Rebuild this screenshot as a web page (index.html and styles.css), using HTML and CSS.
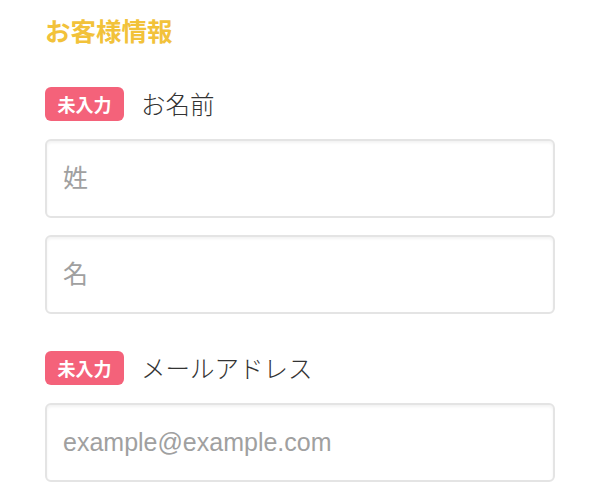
FILE: index.html
```html
<!DOCTYPE html>
<html lang="ja">
<head>
<meta charset="utf-8">
<link rel="stylesheet" href="styles.css">
</head>
<body>
<div class="page">
  <h2 class="title">お客様情報</h2>
  <div class="field">
    <div class="label-row"><span class="badge">未入力</span><span class="label">お名前</span></div>
    <div class="inputs">
      <input class="input" type="text" placeholder="姓">
      <input class="input" type="text" placeholder="名">
    </div>
  </div>
  <div class="field">
    <div class="label-row"><span class="badge">未入力</span><span class="label">メールアドレス</span></div>
    <div class="inputs">
      <input class="input" type="email" placeholder="example@example.com">
    </div>
  </div>
</div>
</body>
</html>
```
FILE: styles.css
```css
html, body {
  margin: 0;
  padding: 0;
  background: #ffffff;
}
body {
  font-family: "Liberation Sans", "Noto Sans CJK JP", sans-serif;
  color: #333333;
}
.page {
  padding: 17px 45px 0 45px;
}
.title {
  margin: 0;
  font-size: 25.5px;
  line-height: 26px;
  font-weight: 700;
  color: #f2c23a;
  font-family: "Noto Sans CJK JP", sans-serif;
}
.field {
  margin-top: 44px;
}
.field + .field {
  margin-top: 37px;
}
.label-row {
  display: flex;
  align-items: center;
  gap: 17px;
  height: 34px;
}
.badge {
  display: inline-flex;
  align-items: center;
  justify-content: center;
  width: 79px;
  height: 34px;
  background: #f4627a;
  color: #ffffff;
  border-radius: 6px;
  font-family: "Noto Sans CJK JP", sans-serif;
  font-weight: 700;
  font-size: 18px;
  line-height: 1;
}
.label {
  font-family: "Noto Sans CJK JP", sans-serif;
  font-weight: 300;
  font-size: 24.5px;
  line-height: 1;
  color: #333333;
}
.inputs {
  margin-top: 18px;
  display: flex;
  flex-direction: column;
  gap: 17px;
}
.input {
  box-sizing: border-box;
  width: 100%;
  height: 79px;
  margin: 0;
  padding: 0 16px;
  border: 2px solid #e4e4e4;
  border-radius: 6px;
  box-shadow: inset 0 2px 3px rgba(0, 0, 0, 0.05);
  background: #ffffff;
  font-family: "Liberation Sans", "Noto Sans CJK JP", sans-serif;
  font-size: 25px;
  color: #333333;
  outline: none;
}
.input::placeholder {
  color: #a0a0a0;
}
```
